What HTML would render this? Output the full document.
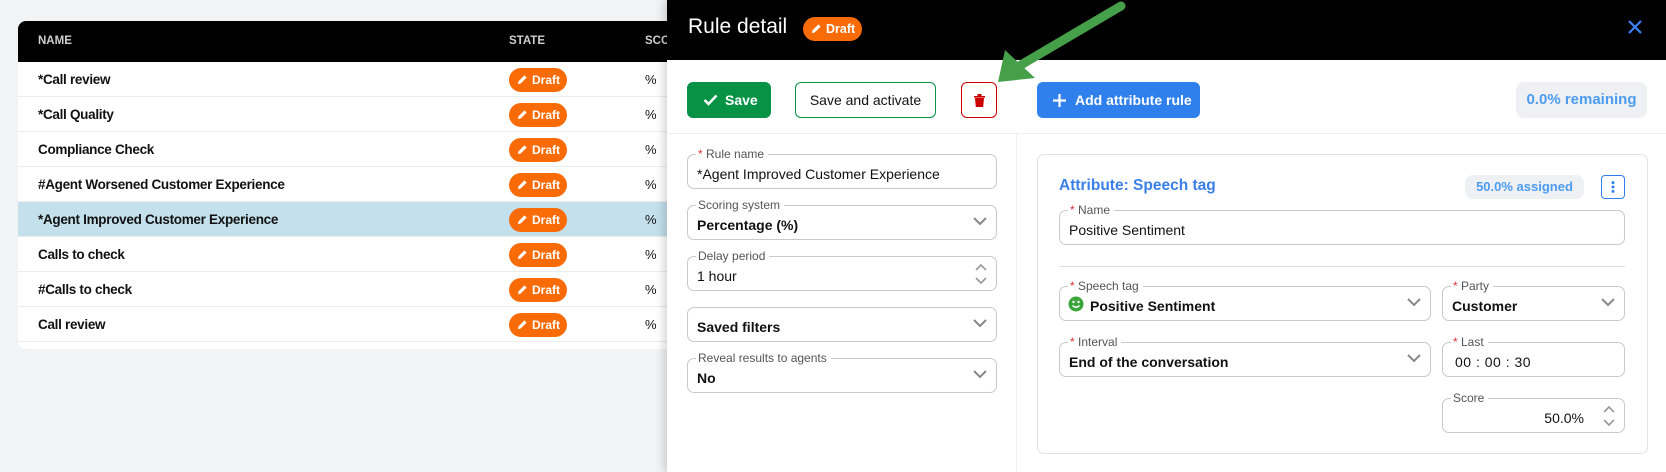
<!DOCTYPE html>
<html><head><meta charset="utf-8"><style>
*{box-sizing:border-box;margin:0;padding:0}
body{width:1666px;height:472px;overflow:hidden;background:#f2f3f5;font-family:"Liberation Sans",sans-serif;position:relative;color:#111}
.a{position:absolute}
.card{left:18px;top:21px;width:680px;height:328px;background:#fff;border-radius:8px;overflow:hidden}
.th{left:0;top:0;width:100%;height:41px;background:#000}
.th span{position:absolute;top:14px;font-size:11.5px;font-weight:bold;color:#cfcfcf}
.row{left:0;width:100%;height:35px;border-bottom:1px solid #ececec}
.row .n{position:absolute;left:20px;top:10px;font-size:13.5px;font-weight:bold;letter-spacing:-.3px}
.row .p{position:absolute;left:627px;top:10px;font-size:13px}
.badge{position:absolute;height:24px;background:#f96b07;border-radius:12px;color:#fff;font-size:12px;font-weight:bold;line-height:24px;padding-left:23px}
.badge svg{position:absolute;left:8px;top:6px}
.panel{left:667px;top:0;width:999px;height:472px;background:#fff;box-shadow:-4px 0 8px rgba(0,0,0,.15)}
.hd{left:0;top:0;width:100%;height:60px;background:#000}
.box{position:absolute;border:1px solid #c9c9c9;border-radius:7px;height:35px;background:#fff}
.box .l{position:absolute;top:-8px;left:8px;background:#fff;padding:0 4px 0 2px;font-size:12px;color:#555;line-height:14px}
.box .l b{color:#e0323c;font-weight:normal}
.box .v{position:absolute;left:9px;top:11px;font-size:14px;color:#111}
.box .v.b{font-weight:bold}
.chev{position:absolute;right:9px;top:11px}
</style></head><body>
<div class="a card">
 <div class="a th"><span style="left:20px">NAME</span><span style="left:491px">STATE</span><span style="left:627px">SCO</span></div>
 <div class="a row" style="top:41px"><span class="n">*Call review</span><span class="p">%</span></div>
 <div class="a row" style="top:76px"><span class="n">*Call Quality</span><span class="p">%</span></div>
 <div class="a row" style="top:111px"><span class="n">Compliance Check</span><span class="p">%</span></div>
 <div class="a row" style="top:146px"><span class="n">#Agent Worsened Customer Experience</span><span class="p">%</span></div>
 <div class="a row" style="top:181px;background:#c3e0ec"><span class="n">*Agent Improved Customer Experience</span><span class="p">%</span></div>
 <div class="a row" style="top:216px"><span class="n">Calls to check</span><span class="p">%</span></div>
 <div class="a row" style="top:251px"><span class="n">#Calls to check</span><span class="p">%</span></div>
 <div class="a row" style="top:286px"><span class="n">Call review</span><span class="p">%</span></div>
</div>
<div id="badges"></div>
<div class="a panel">
 <div class="a hd">
  <div class="a" style="left:21px;top:15px;font-size:21px;color:#fff">Rule detail</div>
  <div class="badge" style="left:136px;top:17px;width:59px;font-size:12.5px"><svg width="11" height="11" viewBox="0 0 12 12"><path d="M1 11l.6-3 6.5-6.5 2.4 2.4L4 10.4z" fill="#fff"/></svg>Draft</div>
  <svg class="a" style="left:960px;top:19px" width="16" height="16" viewBox="0 0 16 16"><path d="M2 2l12 12M14 2L2 14" stroke="#3b82f6" stroke-width="2.2"/></svg>
 </div>
 <div class="a" style="left:20px;top:82px;width:84px;height:36px;background:#079346;border-radius:6px;color:#fff;font-weight:bold;font-size:14px;line-height:36px;padding-left:38px">Save
  <svg class="a" style="left:16px;top:12px" width="15" height="12" viewBox="0 0 15 12"><path d="M1.5 6l4 4L13.5 1.5" stroke="#fff" stroke-width="2.5" fill="none"/></svg></div>
 <div class="a" style="left:128px;top:82px;width:141px;height:36px;border:1px solid #079346;border-radius:6px;font-size:14px;line-height:34px;text-align:center">Save and activate</div>
 <div class="a" style="left:294px;top:82px;width:36px;height:36px;border:1px solid #c00;border-radius:6px">
  <svg class="a" style="left:12px;top:11px" width="11" height="13" viewBox="0 0 11 13"><path d="M0 2h11v1.6H0zM3.5 0h4v2h-4zM1 4h9l-.8 9H1.8z" fill="#c00"/></svg></div>
 <div class="a" style="left:370px;top:82px;width:163px;height:36px;background:#2f80ed;border-radius:6px;color:#fff;font-weight:bold;font-size:14px;line-height:36px;padding-left:38px">Add attribute rule
  <svg class="a" style="left:16px;top:12px" width="13" height="13" viewBox="0 0 13 13"><path d="M6.5 0v13M0 6.5h13" stroke="#fff" stroke-width="2.2"/></svg></div>
 <div class="a" style="left:849px;top:82px;width:131px;height:36px;background:#eef0f3;border-radius:8px;color:#4c9cf0;font-weight:bold;font-size:15px;line-height:36px;text-align:center">0.0% remaining</div>
 <div class="a" style="left:0;top:133px;width:100%;height:1px;background:#eee"></div>
 <div class="a" style="left:349px;top:133px;width:1px;height:339px;background:#eee"></div>

 <div class="box" style="left:20px;top:154px;width:310px"><span class="l"><b>*</b> Rule name</span><span class="v">*Agent Improved Customer Experience</span></div>
 <div class="box" style="left:20px;top:205px;width:310px"><span class="l">Scoring system</span><span class="v b">Percentage (%)</span><svg class="chev" width="14" height="9" viewBox="0 0 14 9"><path d="M1 1l6 6 6-6" stroke="#888" stroke-width="2" fill="none"/></svg></div>
 <div class="box" style="left:20px;top:256px;width:310px"><span class="l">Delay period</span><span class="v">1 hour</span><svg class="a" style="right:9px;top:6px" width="12" height="22" viewBox="0 0 12 22"><path d="M1 7l5-5 5 5M1 15l5 5 5-5" stroke="#999" stroke-width="1.6" fill="none"/></svg></div>
 <div class="box" style="left:20px;top:307px;width:310px"><span class="v b">Saved filters</span><svg class="chev" width="14" height="9" viewBox="0 0 14 9"><path d="M1 1l6 6 6-6" stroke="#888" stroke-width="2" fill="none"/></svg></div>
 <div class="box" style="left:20px;top:358px;width:310px"><span class="l">Reveal results to agents</span><span class="v b">No</span><svg class="chev" width="14" height="9" viewBox="0 0 14 9"><path d="M1 1l6 6 6-6" stroke="#888" stroke-width="2" fill="none"/></svg></div>

 <div class="a" style="left:370px;top:154px;width:611px;height:300px;border:1px solid #e3e3e3;border-radius:7px">
  <div class="a" style="left:21px;top:22px;font-size:15.5px;font-weight:bold;color:#3a80e8">Attribute: Speech tag</div>
  <div class="a" style="left:427px;top:20px;width:119px;height:24px;background:#eef0f3;border-radius:8px;color:#4c9cf0;font-weight:bold;font-size:13px;line-height:24px;text-align:center">50.0% assigned</div>
  <div class="a" style="left:563px;top:20px;width:24px;height:24px;border:1.5px solid #2f80ed;border-radius:4px">
   <svg class="a" style="left:9px;top:5px" width="4" height="12" viewBox="0 0 4 12"><circle cx="2" cy="1.6" r="1.5" fill="#2f80ed"/><circle cx="2" cy="6" r="1.5" fill="#2f80ed"/><circle cx="2" cy="10.4" r="1.5" fill="#2f80ed"/></svg></div>
  <div class="box" style="left:21px;top:55px;width:566px"><span class="l"><b>*</b> Name</span><span class="v">Positive Sentiment</span></div>
  <div class="a" style="left:21px;top:111px;width:566px;height:1px;background:#ddd"></div>
  <div class="box" style="left:21px;top:131px;width:372px"><span class="l"><b>*</b> Speech tag</span>
   <svg class="a" style="left:8px;top:9px" width="16" height="16" viewBox="0 0 16 16"><circle cx="8" cy="8" r="7.5" fill="#3ba53b"/><circle cx="5.5" cy="6" r="1.2" fill="#fff"/><circle cx="10.5" cy="6" r="1.2" fill="#fff"/><path d="M4.5 9.5q3.5 3.5 7 0" stroke="#fff" stroke-width="1.5" fill="none"/></svg>
   <span class="v b" style="left:30px">Positive Sentiment</span><svg class="chev" width="14" height="9" viewBox="0 0 14 9"><path d="M1 1l6 6 6-6" stroke="#888" stroke-width="2" fill="none"/></svg></div>
  <div class="box" style="left:404px;top:131px;width:183px"><span class="l"><b>*</b> Party</span><span class="v b">Customer</span><svg class="chev" width="14" height="9" viewBox="0 0 14 9"><path d="M1 1l6 6 6-6" stroke="#888" stroke-width="2" fill="none"/></svg></div>
  <div class="box" style="left:21px;top:187px;width:372px"><span class="l"><b>*</b> Interval</span><span class="v b">End of the conversation</span><svg class="chev" width="14" height="9" viewBox="0 0 14 9"><path d="M1 1l6 6 6-6" stroke="#888" stroke-width="2" fill="none"/></svg></div>
  <div class="box" style="left:404px;top:187px;width:183px"><span class="l"><b>*</b> Last</span><span class="v" style="left:12px;letter-spacing:.5px">00 : 00 : 30</span></div>
  <div class="box" style="left:404px;top:243px;width:183px"><span class="l">Score</span><span class="v" style="left:auto;right:40px">50.0%</span><svg class="a" style="right:9px;top:6px" width="12" height="22" viewBox="0 0 12 22"><path d="M1 7l5-5 5 5M1 15l5 5 5-5" stroke="#999" stroke-width="1.6" fill="none"/></svg></div>
 </div>
</div>
<svg class="a" style="left:0;top:0" width="1666" height="472"><path d="M1121 6L1014 69" stroke="#46a049" stroke-width="9" stroke-linecap="round"/><path d="M998 82L1005 50L1035 78z" fill="#46a049"/></svg>
<script>
var ys=[62,97,132,167,202,237,272,307],h='';
ys.forEach(function(y){h+='<div class="badge" style="left:509px;top:'+(y+6)+'px;width:58px"><svg width="11" height="11" viewBox="0 0 12 12"><path d="M1 11l.6-3 6.5-6.5 2.4 2.4L4 10.4z" fill="#fff"/></svg>Draft</div>'});
document.getElementById('badges').innerHTML=h;
</script>
</body></html>
